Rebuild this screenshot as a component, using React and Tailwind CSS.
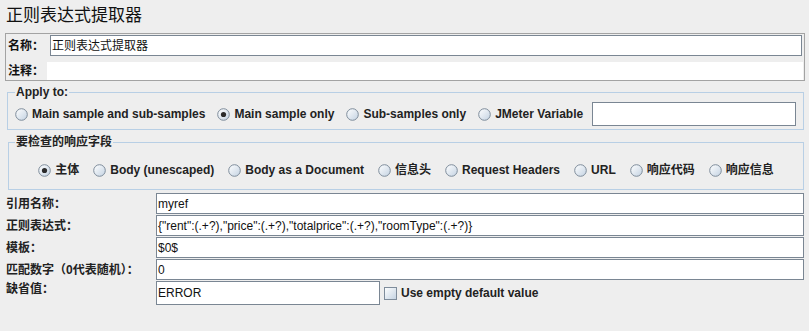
import React from 'react';

const FONT = { fontFamily: '"Liberation Sans", "Noto Sans CJK SC", sans-serif' };

function Radio({ checked }) {
  return (
    <svg width="13" height="13" viewBox="0 0 13 13" className="shrink-0">
      <defs>
        <linearGradient id="rg" x1="0" y1="0" x2="1" y2="1">
          <stop offset="0" stopColor="#ffffff" />
          <stop offset="1" stopColor="#c3d2e2" />
        </linearGradient>
      </defs>
      <circle cx="6.5" cy="6.5" r="5.8" fill="url(#rg)" stroke="#7e8c9b" strokeWidth="1" />
      {checked && <circle cx="6.5" cy="6.5" r="2.6" fill="#2b2b2b" />}
    </svg>
  );
}

function Check() {
  return (
    <svg width="13" height="13" viewBox="0 0 13 13" className="shrink-0">
      <defs>
        <linearGradient id="cg" x1="0" y1="0" x2="1" y2="1">
          <stop offset="0" stopColor="#ffffff" />
          <stop offset="1" stopColor="#c3d2e2" />
        </linearGradient>
      </defs>
      <rect x="0.5" y="0.5" width="12" height="12" fill="url(#cg)" stroke="#7e8c9b" />
    </svg>
  );
}

function Option({ label, checked }) {
  return (
    <div className="flex items-center gap-[4px]">
      <Radio checked={checked} />
      <span className="font-bold text-[12px] leading-[16px] text-[#222]">{label}</span>
    </div>
  );
}

function Field({ value, className = '' }) {
  return (
    <div className={`bg-white border border-[#7a8693] flex items-center pl-[1px] text-[12px] text-[#111] ${className}`}>
      {value}
    </div>
  );
}

const rows = [
  { label: '引用名称：', value: 'myref' },
  { label: '正则表达式：', value: '{"rent":(.+?),"price":(.+?),"totalprice":(.+?),"roomType":(.+?)}' },
  { label: '模板：', value: '$0$' },
  { label: '匹配数字（0代表随机）：', value: '0' },
];

export default function App() {
  return (
    <div className="w-[809px] h-[331px] bg-[#eeeeee] overflow-hidden text-[#111]" style={FONT}>
      <div className="h-[33px] pl-[6px] pt-[5px] text-[17px] leading-[22px]">正则表达式提取器</div>

      <div className="ml-[5px] mr-[4px] h-[48px] border border-[#a3a3a3]">
        <div className="flex items-center h-[21px] mt-[1px]">
          <span className="w-[44px] pl-[2px] font-bold text-[12px]">名称：</span>
          <Field value="正则表达式提取器" className="flex-1 h-[21px] mr-[2px]" />
        </div>
        <div className="flex items-center h-[18px] mt-[6px]">
          <span className="w-[41px] pl-[2px] font-bold text-[12px]">注释：</span>
          <div className="flex-1 h-[18px] bg-white mr-[1px]" />
        </div>
      </div>

      <fieldset className="ml-[7px] mr-[5px] mt-[4px] border border-[#b8cfe5] px-[7px] pt-[3px] pb-[3px]">
        <legend className="px-[1px] font-bold text-[12px] leading-[14px] text-[#222]">Apply to:</legend>
        <div className="flex items-center gap-[12px]">
          <Option label="Main sample and sub-samples" />
          <Option label="Main sample only" checked />
          <Option label="Sub-samples only" />
          <Option label="JMeter Variable" />
          <div className="flex-1 h-[24px] ml-[-3px] bg-white border border-[#7a8693]" />
        </div>
      </fieldset>

      <fieldset className="ml-[8px] mr-[5px] mt-[5px] border border-[#b8cfe5] px-[5px] pt-[13px] pb-[11px]">
        <legend className="ml-[1px] px-[1px] font-bold text-[12px] leading-[14px] text-[#222]">要检查的响应字段</legend>
        <div className="flex items-center justify-center gap-[14px] h-[16px]">
          <Option label="主体" checked />
          <Option label="Body (unescaped)" />
          <Option label="Body as a Document" />
          <Option label="信息头" />
          <Option label="Request Headers" />
          <Option label="URL" />
          <Option label="响应代码" />
          <Option label="响应信息" />
        </div>
      </fieldset>

      <div className="mt-[3px] ml-[6px] mr-[5px] flex flex-col gap-[1px]">
        {rows.map((r) => (
          <div key={r.label} className="flex items-center h-[21px]">
            <span className="w-[150px] font-bold text-[12px] text-[#222]">{r.label}</span>
            <Field value={r.value} className="flex-1 h-[21px]" />
          </div>
        ))}
        <div className="flex items-start">
          <span className="w-[150px] font-bold text-[12px] leading-[16px] text-[#222]">缺省值：</span>
          <Field value="ERROR" className="w-[224px] h-[24px]" />
          <div className="flex items-center gap-[4px] ml-[4px] h-[24px]">
            <Check />
            <span className="font-bold text-[12px] text-[#222]">Use empty default value</span>
          </div>
        </div>
      </div>
    </div>
  );
}
